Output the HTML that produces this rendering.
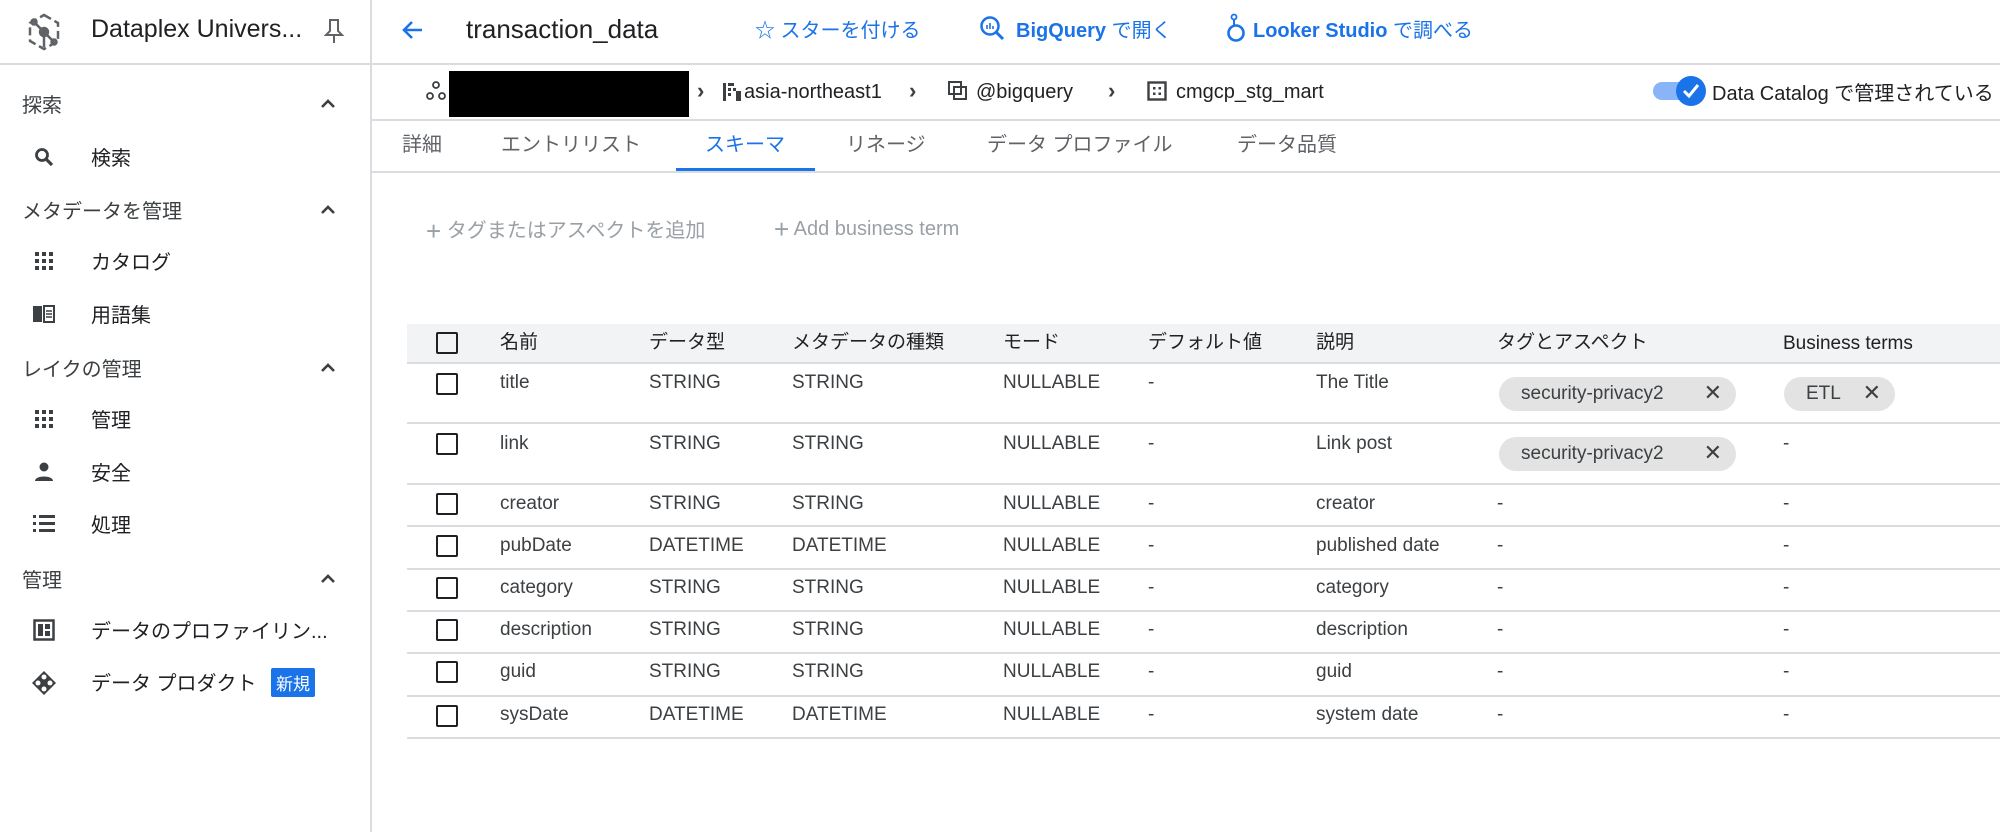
<!DOCTYPE html>
<html><head><meta charset="utf-8"><style>
*{margin:0;padding:0;box-sizing:border-box}
body{width:2000px;height:832px;background:#fff;font-family:"Liberation Sans","Noto Sans CJK JP",sans-serif;color:#202124;position:relative;overflow:hidden}
.a{position:absolute;white-space:nowrap}
.sb{font-size:20px;color:#3c4043}
.nav{font-size:20px;color:#202124}
.hl{background:#dadce0;position:absolute;height:2px}
.lnk{font-size:20px;color:#1a73e8}
.tab{font-size:20px;color:#5f6368;top:128px}
.th{font-size:19px;color:#202124;top:331px;line-height:24px}
.td{font-size:19px;color:#3c4043}
.cb{position:absolute;left:436px;width:22px;height:22px;border:2.5px solid #202124;border-radius:2px}
.chip{position:absolute;height:34px;border-radius:17px;background:#e3e3e3;font-size:19px;color:#3c4043;padding:6px 0 0 22px}
.chip b{font-weight:normal;position:absolute;right:14px;top:3px;font-size:22px}
.rl{position:absolute;left:407px;right:0;height:1.5px;background:#dadce0}
</style></head><body>
<!-- sidebar -->
<div style="position:absolute;left:370px;top:0;width:1.5px;height:832px;background:#dadce0"></div>
<div class="hl" style="left:0;top:63px;width:2000px"></div>
<svg class="a" style="left:24px;top:12px" width="40" height="40" viewBox="0 0 40 40" fill="none" stroke="#5f6368" stroke-width="2.5"><path d="M20 3 L34 11 V29 L20 37 L6 29 V11 Z" stroke-dasharray="8 4"/><circle cx="20" cy="20" r="4" fill="#5f6368"/><path d="M20 20 L10 10 M20 20 L30 30 M20 20 L20 35"/><circle cx="10" cy="10" r="2.5"/><circle cx="30" cy="30" r="2.5"/></svg>
<div class="a" style="left:91px;top:15px;font-size:25px">Dataplex Univers...</div>
<svg class="a" style="left:323px;top:18px" width="22" height="26" viewBox="0 0 22 26" fill="none" stroke="#5f6368" stroke-width="2"><path d="M6 2H16M7 2V13L3 17H19L15 13V2M11 17V25"/></svg>

<div class="a sb" style="left:22px;top:89px">探索</div>
<div class="a sb" style="left:22px;top:195px">メタデータを管理</div>
<div class="a sb" style="left:22px;top:353px">レイクの管理</div>
<div class="a sb" style="left:22px;top:564px">管理</div>
<svg class="a" style="left:318px;top:96px" width="20" height="14" viewBox="0 0 20 14"><path d="M4 11L10 5L16 11" stroke="#3c4043" stroke-width="2.6" fill="none"/></svg>
<svg class="a" style="left:318px;top:202px" width="20" height="14" viewBox="0 0 20 14"><path d="M4 11L10 5L16 11" stroke="#3c4043" stroke-width="2.6" fill="none"/></svg>
<svg class="a" style="left:318px;top:360px" width="20" height="14" viewBox="0 0 20 14"><path d="M4 11L10 5L16 11" stroke="#3c4043" stroke-width="2.6" fill="none"/></svg>
<svg class="a" style="left:318px;top:571px" width="20" height="14" viewBox="0 0 20 14"><path d="M4 11L10 5L16 11" stroke="#3c4043" stroke-width="2.6" fill="none"/></svg>

<div class="a nav" style="left:91px;top:142px">検索</div>
<div class="a nav" style="left:91px;top:246px">カタログ</div>
<div class="a nav" style="left:91px;top:299px">用語集</div>
<div class="a nav" style="left:91px;top:404px">管理</div>
<div class="a nav" style="left:91px;top:457px">安全</div>
<div class="a nav" style="left:91px;top:509px">処理</div>
<div class="a nav" style="left:91px;top:615px">データのプロファイリン...</div>
<div class="a nav" style="left:91px;top:667px">データ プロダクト</div>
<div class="a" style="left:271px;top:668px;background:#1a73e8;color:#fff;font-size:17px;padding:2px 5px;border-radius:2px">新規</div>
<!-- nav icons -->
<svg class="a" style="left:33px;top:146px" width="22" height="22" viewBox="0 0 22 22"><circle cx="9" cy="9" r="5.5" stroke="#3c4043" stroke-width="2.8" fill="none"/><path d="M13 13L19 19" stroke="#3c4043" stroke-width="3.2"/></svg>
<svg class="a" style="left:35px;top:252px" width="18" height="18" viewBox="0 0 18 18" fill="#3c4043"><rect x="0" y="0" width="4" height="4"/><rect x="7" y="0" width="4" height="4"/><rect x="14" y="0" width="4" height="4"/><rect x="0" y="7" width="4" height="4"/><rect x="7" y="7" width="4" height="4"/><rect x="14" y="7" width="4" height="4"/><rect x="0" y="14" width="4" height="4"/><rect x="7" y="14" width="4" height="4"/><rect x="14" y="14" width="4" height="4"/></svg>
<svg class="a" style="left:32px;top:304px" width="24" height="20" viewBox="0 0 24 20"><path d="M1 2H10V18H1Z" fill="#3c4043"/><path d="M12 2H22V18H12Z" stroke="#3c4043" stroke-width="2" fill="none"/><path d="M14 7H20M14 10H20M14 13H20" stroke="#3c4043" stroke-width="1.5"/></svg>
<svg class="a" style="left:35px;top:410px" width="18" height="18" viewBox="0 0 18 18" fill="#3c4043"><rect x="0" y="0" width="4" height="4"/><rect x="7" y="0" width="4" height="4"/><rect x="14" y="0" width="4" height="4"/><rect x="0" y="7" width="4" height="4"/><rect x="7" y="7" width="4" height="4"/><rect x="14" y="7" width="4" height="4"/><rect x="0" y="14" width="4" height="4"/><rect x="7" y="14" width="4" height="4"/><rect x="14" y="14" width="4" height="4"/></svg>
<svg class="a" style="left:34px;top:462px" width="20" height="20" viewBox="0 0 20 20" fill="#3c4043"><circle cx="10" cy="5" r="4.5"/><path d="M1 19C1 13 19 13 19 19Z"/></svg>
<svg class="a" style="left:33px;top:514px" width="22" height="20" viewBox="0 0 22 20" fill="#3c4043"><rect x="0" y="1" width="3" height="3"/><rect x="0" y="8" width="3" height="3"/><rect x="0" y="15" width="3" height="3"/><rect x="6" y="1" width="16" height="3"/><rect x="6" y="8" width="16" height="3"/><rect x="6" y="15" width="16" height="3"/></svg>
<svg class="a" style="left:33px;top:619px" width="22" height="22" viewBox="0 0 22 22"><rect x="1.5" y="1.5" width="19" height="19" stroke="#3c4043" stroke-width="2.5" fill="none"/><rect x="5" y="5" width="5" height="12" fill="#3c4043"/><rect x="12" y="5" width="5" height="5" fill="#3c4043"/><rect x="12" y="12" width="5" height="5" fill="#3c4043"/></svg>
<svg class="a" style="left:31px;top:670px" width="26" height="26" viewBox="0 0 26 26"><path d="M13 1L25 13L13 25L1 13Z" fill="#3c4043"/><circle cx="13" cy="7" r="2.5" fill="#fff"/><circle cx="13" cy="19" r="2.5" fill="#fff"/><circle cx="7" cy="13" r="2.5" fill="#fff"/><circle cx="19" cy="13" r="2.5" fill="#fff"/></svg>

<!-- header -->
<svg class="a" style="left:400px;top:17px" width="26" height="26" viewBox="0 0 26 26"><path d="M22 13H5M12 5L4 13L12 21" stroke="#1a73e8" stroke-width="2.6" fill="none"/></svg>
<div class="a" style="left:466px;top:14px;font-size:26px">transaction_data</div>
<div class="a lnk" style="left:755px;top:14px">☆ スターを付ける</div>
<svg class="a" style="left:979px;top:15px" width="26" height="26" viewBox="0 0 26 26"><circle cx="11" cy="11" r="8.5" stroke="#1a73e8" stroke-width="2.5" fill="none"/><path d="M17 17L24 24" stroke="#1a73e8" stroke-width="3"/><path d="M8 10V14M11 8V14M14 11V14" stroke="#1a73e8" stroke-width="1.6"/></svg>
<div class="a lnk" style="left:1016px;top:14px;font-weight:bold">BigQuery <span style="font-weight:normal">で開く</span></div>
<svg class="a" style="left:1226px;top:12px" width="20" height="32" viewBox="0 0 20 32"><circle cx="10" cy="21" r="7.5" stroke="#1a73e8" stroke-width="2.6" fill="none"/><circle cx="8" cy="5" r="2.5" stroke="#1a73e8" stroke-width="1.8" fill="none"/><path d="M8 8V13" stroke="#1a73e8" stroke-width="2"/></svg>
<div class="a lnk" style="left:1253px;top:14px;font-weight:bold">Looker Studio <span style="font-weight:normal">で調べる</span></div>

<!-- breadcrumb -->
<svg class="a" style="left:425px;top:80px" width="22" height="22" viewBox="0 0 22 22" fill="none" stroke="#3c4043" stroke-width="1.8"><circle cx="11" cy="5" r="3"/><circle cx="5" cy="16" r="3"/><circle cx="17" cy="16" r="3"/></svg>
<div class="a" style="left:449px;top:71px;width:240px;height:46px;background:#000"></div>
<div class="a" style="left:697px;top:78px;font-size:22px;color:#3c4043;font-weight:bold">›</div>
<svg class="a" style="left:722px;top:82px" width="20" height="20" viewBox="0 0 20 20" fill="#3c4043"><rect x="1" y="1" width="3" height="18"/><rect x="6" y="1" width="6" height="3"/><rect x="6" y="6" width="3" height="3"/><rect x="11" y="6" width="3" height="3"/><rect x="6" y="11" width="3" height="3"/><rect x="14" y="9" width="5" height="10"/></svg>
<div class="a" style="left:744px;top:81px;font-size:20px;color:#202124">asia-northeast1</div>
<div class="a" style="left:909px;top:78px;font-size:22px;color:#3c4043;font-weight:bold">›</div>
<svg class="a" style="left:948px;top:81px" width="20" height="20" viewBox="0 0 20 20" fill="none" stroke="#3c4043" stroke-width="2"><rect x="1" y="1" width="12" height="12"/><rect x="6" y="6" width="12" height="12"/></svg>
<div class="a" style="left:976px;top:81px;font-size:20px;color:#202124">@bigquery</div>
<div class="a" style="left:1108px;top:78px;font-size:22px;color:#3c4043;font-weight:bold">›</div>
<svg class="a" style="left:1147px;top:81px" width="20" height="20" viewBox="0 0 20 20"><rect x="1.5" y="1.5" width="17" height="17" stroke="#3c4043" stroke-width="2.4" fill="none"/><rect x="6" y="6" width="2.5" height="2.5" fill="#3c4043"/><rect x="11.5" y="6" width="2.5" height="2.5" fill="#3c4043"/><rect x="6" y="11.5" width="2.5" height="2.5" fill="#3c4043"/><rect x="11.5" y="11.5" width="2.5" height="2.5" fill="#3c4043"/></svg>
<div class="a" style="left:1176px;top:81px;font-size:20px;color:#202124">cmgcp_stg_mart</div>
<div class="a" style="left:1653px;top:82px;width:44px;height:18px;border-radius:9px;background:#8ab4f8"></div>
<svg class="a" style="left:1675px;top:75px" width="32" height="32" viewBox="0 0 32 32"><circle cx="16" cy="16" r="15" fill="#1a73e8"/><path d="M9 16L14 21L23 10" stroke="#fff" stroke-width="3" fill="none"/></svg>
<div class="a" style="left:1712px;top:77px;font-size:20px;color:#202124">Data Catalog で管理されている</div>
<div class="hl" style="left:370px;top:119px;width:1630px"></div>

<!-- tabs -->
<div class="a tab" style="left:402px">詳細</div>
<div class="a tab" style="left:501px">エントリリスト</div>
<div class="a tab" style="left:705px;color:#1a73e8">スキーマ</div>
<div class="a tab" style="left:846px">リネージ</div>
<div class="a tab" style="left:987px">データ プロファイル</div>
<div class="a tab" style="left:1237px">データ品質</div>
<div class="a" style="left:676px;top:168px;width:139px;height:3px;background:#1a73e8"></div>
<div class="hl" style="left:370px;top:171px;width:1630px"></div>

<div class="a" style="left:426px;top:214px;font-size:20px;color:#9aa0a6"><span style="font-size:26px;vertical-align:-3px">+</span> タグまたはアスペクトを追加</div>
<div class="a" style="left:774px;top:214px;font-size:20px;color:#9aa0a6"><span style="font-size:26px;vertical-align:-3px">+</span> Add business term</div>

<!-- table -->
<div class="a" style="left:407px;top:324px;width:1593px;height:39px;background:#f1f3f4"></div>
<div class="cb" style="top:332px"></div>
<div class="a th" style="left:500px">名前</div>
<div class="a th" style="left:649px">データ型</div>
<div class="a th" style="left:792px">メタデータの種類</div>
<div class="a th" style="left:1003px">モード</div>
<div class="a th" style="left:1148px">デフォルト値</div>
<div class="a th" style="left:1316px">説明</div>
<div class="a th" style="left:1497px">タグとアスペクト</div>
<div class="a th" style="left:1783px;top:332px">Business terms</div>
<div class="rl" style="top:362px"></div>
<div class="rl" style="top:422px"></div>
<div class="rl" style="top:483px"></div>
<div class="rl" style="top:525px"></div>
<div class="rl" style="top:568px"></div>
<div class="rl" style="top:610px"></div>
<div class="rl" style="top:652px"></div>
<div class="rl" style="top:695px"></div>
<div class="rl" style="top:737px"></div>

<div class="cb" style="top:373px"></div><div class="cb" style="top:433px"></div><div class="cb" style="top:493px"></div><div class="cb" style="top:535px"></div><div class="cb" style="top:577px"></div><div class="cb" style="top:619px"></div><div class="cb" style="top:661px"></div><div class="cb" style="top:705px"></div>

<div class="a td" style="left:500px;top:372px">title</div><div class="a td" style="left:649px;top:372px">STRING</div><div class="a td" style="left:792px;top:372px">STRING</div><div class="a td" style="left:1003px;top:372px">NULLABLE</div><div class="a td" style="left:1148px;top:372px">-</div><div class="a td" style="left:1316px;top:372px">The Title</div>
<div class="chip" style="left:1499px;top:377px;width:237px">security-privacy2<b>✕</b></div>
<div class="chip" style="left:1784px;top:377px;width:111px">ETL<b>✕</b></div>

<div class="a td" style="left:500px;top:433px">link</div><div class="a td" style="left:649px;top:433px">STRING</div><div class="a td" style="left:792px;top:433px">STRING</div><div class="a td" style="left:1003px;top:433px">NULLABLE</div><div class="a td" style="left:1148px;top:433px">-</div><div class="a td" style="left:1316px;top:433px">Link post</div>
<div class="chip" style="left:1499px;top:437px;width:237px">security-privacy2<b>✕</b></div>
<div class="a td" style="left:1783px;top:433px">-</div>

<div class="a td" style="left:500px;top:493px">creator</div><div class="a td" style="left:649px;top:493px">STRING</div><div class="a td" style="left:792px;top:493px">STRING</div><div class="a td" style="left:1003px;top:493px">NULLABLE</div><div class="a td" style="left:1148px;top:493px">-</div><div class="a td" style="left:1316px;top:493px">creator</div><div class="a td" style="left:1497px;top:493px">-</div><div class="a td" style="left:1783px;top:493px">-</div>

<div class="a td" style="left:500px;top:535px">pubDate</div><div class="a td" style="left:649px;top:535px">DATETIME</div><div class="a td" style="left:792px;top:535px">DATETIME</div><div class="a td" style="left:1003px;top:535px">NULLABLE</div><div class="a td" style="left:1148px;top:535px">-</div><div class="a td" style="left:1316px;top:535px">published date</div><div class="a td" style="left:1497px;top:535px">-</div><div class="a td" style="left:1783px;top:535px">-</div>

<div class="a td" style="left:500px;top:577px">category</div><div class="a td" style="left:649px;top:577px">STRING</div><div class="a td" style="left:792px;top:577px">STRING</div><div class="a td" style="left:1003px;top:577px">NULLABLE</div><div class="a td" style="left:1148px;top:577px">-</div><div class="a td" style="left:1316px;top:577px">category</div><div class="a td" style="left:1497px;top:577px">-</div><div class="a td" style="left:1783px;top:577px">-</div>

<div class="a td" style="left:500px;top:619px">description</div><div class="a td" style="left:649px;top:619px">STRING</div><div class="a td" style="left:792px;top:619px">STRING</div><div class="a td" style="left:1003px;top:619px">NULLABLE</div><div class="a td" style="left:1148px;top:619px">-</div><div class="a td" style="left:1316px;top:619px">description</div><div class="a td" style="left:1497px;top:619px">-</div><div class="a td" style="left:1783px;top:619px">-</div>

<div class="a td" style="left:500px;top:661px">guid</div><div class="a td" style="left:649px;top:661px">STRING</div><div class="a td" style="left:792px;top:661px">STRING</div><div class="a td" style="left:1003px;top:661px">NULLABLE</div><div class="a td" style="left:1148px;top:661px">-</div><div class="a td" style="left:1316px;top:661px">guid</div><div class="a td" style="left:1497px;top:661px">-</div><div class="a td" style="left:1783px;top:661px">-</div>

<div class="a td" style="left:500px;top:704px">sysDate</div><div class="a td" style="left:649px;top:704px">DATETIME</div><div class="a td" style="left:792px;top:704px">DATETIME</div><div class="a td" style="left:1003px;top:704px">NULLABLE</div><div class="a td" style="left:1148px;top:704px">-</div><div class="a td" style="left:1316px;top:704px">system date</div><div class="a td" style="left:1497px;top:704px">-</div><div class="a td" style="left:1783px;top:704px">-</div>
</body></html>
